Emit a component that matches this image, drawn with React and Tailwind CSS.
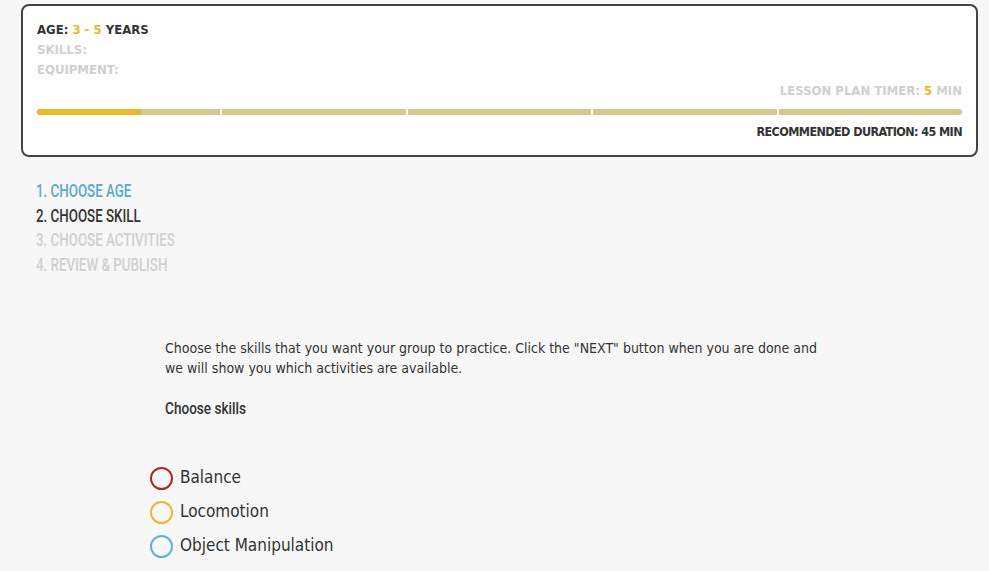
export default function App() {
  const body = { fontFamily: '"DejaVu Sans Condensed", "DejaVu Sans", sans-serif' };
  const cond = { fontFamily: 'Roboto, "DejaVu Sans Condensed", sans-serif' };
  const segs = [0, 1, 2, 3, 4];
  return (
    <div className="min-h-screen bg-[#f7f7f7] pt-[4px] pb-[20px] text-[#333]" style={body}>
      <div className="ml-[21px] mr-[11px] rounded-[8px] border-2 border-[#444] bg-white px-[14px] pt-[14px] pb-[13px] text-[13px] font-bold uppercase leading-[20px]">
        <div className="text-[#333]">
          AGE: <span className="text-[#e8b931]">3 - 5</span> YEARS
        </div>
        <div className="text-[#cfcfcf]">SKILLS:</div>
        <div className="text-[#cfcfcf]">EQUIPMENT:</div>
        <div className="mt-[1px] text-right text-[#cfcfcf]">
          LESSON PLAN TIMER: <span className="text-[#e8b931]">5</span> MIN
        </div>
        <div className="mt-[8px] flex h-[6px] gap-[2px] overflow-hidden rounded-full">
          {segs.map((i) => (
            <div key={i} className="relative flex-1 bg-[#d6c690]">
              {i === 0 && <div className="absolute inset-y-0 left-0 w-[104px] bg-[#e8b931]" />}
            </div>
          ))}
        </div>
        <div className="mt-[7px] text-right text-[12.5px] tracking-[-0.6px] text-[#333]">RECOMMENDED DURATION: 45 MIN</div>
      </div>

      <div className="mt-[22px] pl-[36px] text-[18px] font-medium uppercase leading-[24.5px]" style={cond}>
        <div className="origin-left scale-x-[0.74] whitespace-nowrap text-[#5aaac5]">1. Choose Age</div>
        <div className="origin-left scale-x-[0.74] whitespace-nowrap text-[#333]">2. Choose Skill</div>
        <div className="origin-left scale-x-[0.74] whitespace-nowrap text-[#cfcfcf]">3. Choose Activities</div>
        <div className="origin-left scale-x-[0.74] whitespace-nowrap text-[#cfcfcf]">4. Review &amp; Publish</div>
      </div>

      <div className="mt-[61px] pl-[165px]">
        <p className="w-[665px] text-[14px] leading-[20px] text-[#333]">
          Choose the skills that you want your group to practice. Click the "NEXT" button when you are done and we will show you which activities are available.
        </p>
        <div className="mt-[18px] origin-left scale-x-[0.8] whitespace-nowrap text-[17px] font-medium leading-[24px] text-[#333]" style={cond}>
          Choose skills
        </div>
      </div>

      <div className="mt-[41px] flex flex-col pl-[150px]">
        {[
          ["Balance", "border-[#a82a2a]"],
          ["Locomotion", "border-[#e8b931]"],
          ["Object Manipulation", "border-[#5fb1d0]"],
        ].map(([label, cls]) => (
          <label key={label} className="flex h-[34px] items-center gap-[7px] text-[17px] text-[#333]">
            <span className={`block h-[23px] w-[23px] rounded-full border-2 ${cls}`} />
            <span>{label}</span>
          </label>
        ))}
      </div>
    </div>
  );
}
